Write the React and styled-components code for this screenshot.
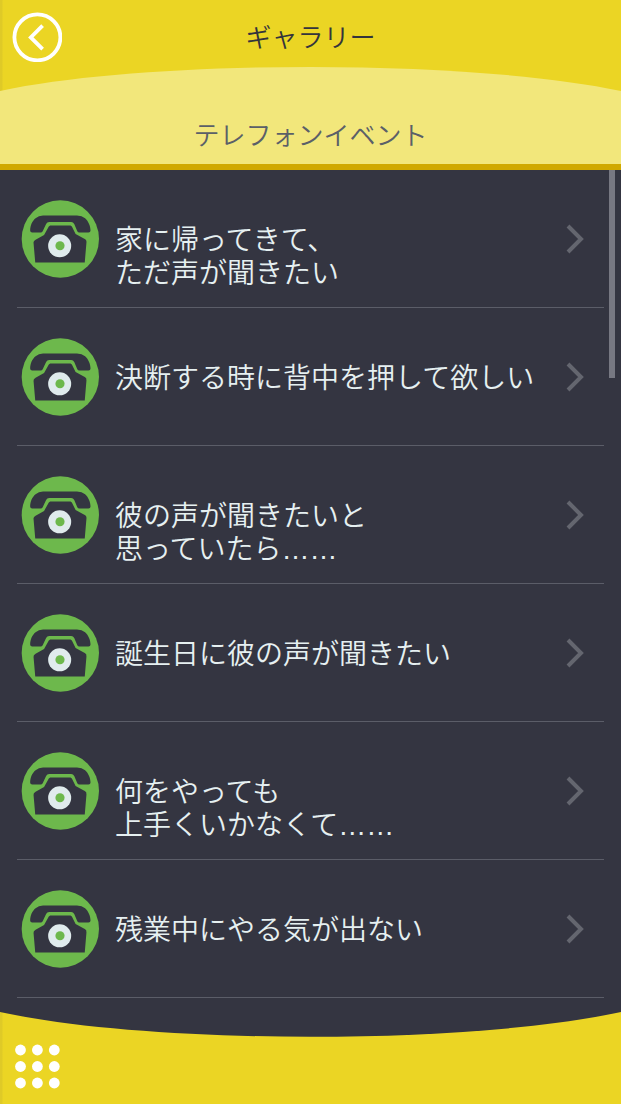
import styled, { createGlobalStyle } from "styled-components";

const events = [
    { id: 1, lines: ["家に帰ってきて、", "ただ声が聞きたい"] },
    { id: 2, lines: ["決断する時に背中を押して欲しい"] },
    { id: 3, lines: ["彼の声が聞きたいと", "思っていたら……"] },
    { id: 4, lines: ["誕生日に彼の声が聞きたい"] },
    { id: 5, lines: ["何をやっても", "上手くいかなくて……"] },
    { id: 6, lines: ["残業中にやる気が出ない"] },
];

export default function App() {
    return (
        <Screen>
            <GlobalStyle />
            <Header>
                <TopBar>
                    <BackButton type="button" aria-label="戻る">
                        <svg viewBox="0 0 50 50" width="50" height="50" fill="none" stroke="#fff" strokeWidth="3.8">
                            <circle cx="25.4" cy="25.3" r="23" />
                            <path d="M30.6 13.6 18.8 25.4 30.6 37.2" />
                        </svg>
                    </BackButton>
                    <Title>ギャラリー</Title>
                </TopBar>
                <Curve $height={24} viewBox="0 0 621 24" preserveAspectRatio="none" aria-hidden="true">
                    <path d="M0 24C150 -8 471 -8 621 24Z" fill="#f2e77b" />
                </Curve>
                <Category>テレフォンイベント</Category>
            </Header>
            <ListArea>
                <List>
                    {events.map((event) => (
                        <li key={event.id}>
                            <Row href={`#event-${event.id}`}>
                                <PhoneIcon />
                                <Label>
                                    {event.lines.map((line) => <Line key={line}>{line}</Line>)}
                                </Label>
                                <Chevron />
                            </Row>
                        </li>
                    ))}
                </List>
                <ScrollThumb />
            </ListArea>
            <Footer>
                <Curve $height={25} viewBox="0 0 621 25" preserveAspectRatio="none" aria-hidden="true">
                    <path d="M0 0C150 33 471 33 621 0Z" fill="#343541" />
                </Curve>
                <FooterBar>
                    <MenuButton type="button" aria-label="メニュー">
                        <svg viewBox="0 0 46 46" width="46" height="46" fill="#fff">
                            {[6, 22.5, 39].map((y) =>
                                [5.5, 22.4, 39.3].map((x) => <circle key={`${x}-${y}`} cx={x} cy={y} r="5.4" />)
                            )}
                        </svg>
                    </MenuButton>
                </FooterBar>
            </Footer>
        </Screen>
    )
}

function PhoneIcon() {
    return (
        <svg viewBox="36 32 230 230" width="78" height="78" aria-hidden="true">
            <circle cx="152" cy="147" r="114" fill="#6db84c" />
            <path
                fill="#343541"
                d="M63 122C63 108 69 94 79 86Q88 78 101 78H201Q216 78 225 86C235 95 241 110 241 122Q241 128 235 128H208Q204 128 202 124L193 103Q190 97 184 97H119Q113 97 110 103L100 124Q98 128 94 128H69Q63 128 63 122Z"
            />
            <path
                fill="#343541"
                d="M122 107H182L186 110L197 132L224 147Q230 150 229 157L224 216H78L73 159Q72 153 79 149L104 135L118 110Z"
            />
            <circle cx="150" cy="167" r="34" fill="#e0ebed" />
            <circle cx="151" cy="167" r="13.5" fill="#6db84c" />
        </svg>
    )
}

function Chevron() {
    return (
        <svg viewBox="0 0 18 30" width="18" height="30" fill="none" stroke="#64666f" strokeWidth="4" aria-hidden="true">
            <path d="M2 2 15 15 2 28" />
        </svg>
    )
}

const GlobalStyle = createGlobalStyle`
    * {
        box-sizing: border-box;
    }

    body {
        margin: 0;
        background-color: #343541;
        font-family: "Liberation Sans", "Noto Sans CJK JP", sans-serif;
        font-weight: 350;
    }
`;

const Screen = styled.div`
    display: flex;
    flex-direction: column;
    height: 100vh;
    background-color: #343541;
`;

const Header = styled.header`
    background: linear-gradient(to right, #dfca27 2px, #ebd524 3px);
    border-bottom: 6px solid #d0a900;
`;

const TopBar = styled.div`
    display: grid;
    grid-template-columns: 50px 1fr 50px;
    align-items: center;
    padding: 12px 12px 5px;
`;

const BackButton = styled.button`
    display: flex;
    padding: 0;
    border: 0;
    background: none;
    cursor: pointer;
`;

const Title = styled.h1`
    margin: 0;
    padding-top: 2px;
    color: #34343c;
    font-size: 26px;
    font-weight: 350;
    line-height: 32px;
    text-align: center;
`;

const Curve = styled.svg`
    display: block;
    width: 100%;
    height: ${(props) => props.$height}px;
`;

const Category = styled.h2`
    margin: 0;
    padding: 29px 0 12px;
    background-color: #f2e77b;
    color: #5b6068;
    font-size: 26px;
    font-weight: 350;
    line-height: 32px;
    text-align: center;
`;

const ListArea = styled.main`
    position: relative;
    flex: 1;
    min-height: 0;
`;

const List = styled.ul`
    height: 100%;
    margin: 0;
    padding: 0 17px;
    list-style: none;
    overflow-y: auto;
    scrollbar-width: none;
`;

const Row = styled.a`
    display: grid;
    grid-template-columns: 78px 1fr 18px;
    column-gap: 16px;
    align-items: center;
    height: 138px;
    padding: 0 20px 0 4px;
    border-bottom: 1px solid #5b5d68;
    color: #e6f0f1;
    text-decoration: none;
`;

/* the first line stays level with the icon, a second one hangs below it */
const Label = styled.span`
    align-self: start;
    padding-top: 54px;
    font-size: 28px;
    line-height: 33px;
    white-space: nowrap;
`;

const Line = styled.span`
    display: block;
`;

const ScrollThumb = styled.div`
    position: absolute;
    top: 0;
    right: 6px;
    width: 6px;
    height: 208px;
    background-color: #777882;
`;

const Footer = styled.footer`
    background: linear-gradient(to right, #dfca27 2px, #ebd524 3px);
`;

const FooterBar = styled.div`
    padding: 7px 15px 14px;
`;

const MenuButton = styled.button`
    display: flex;
    padding: 0;
    border: 0;
    background: none;
    cursor: pointer;
`;
